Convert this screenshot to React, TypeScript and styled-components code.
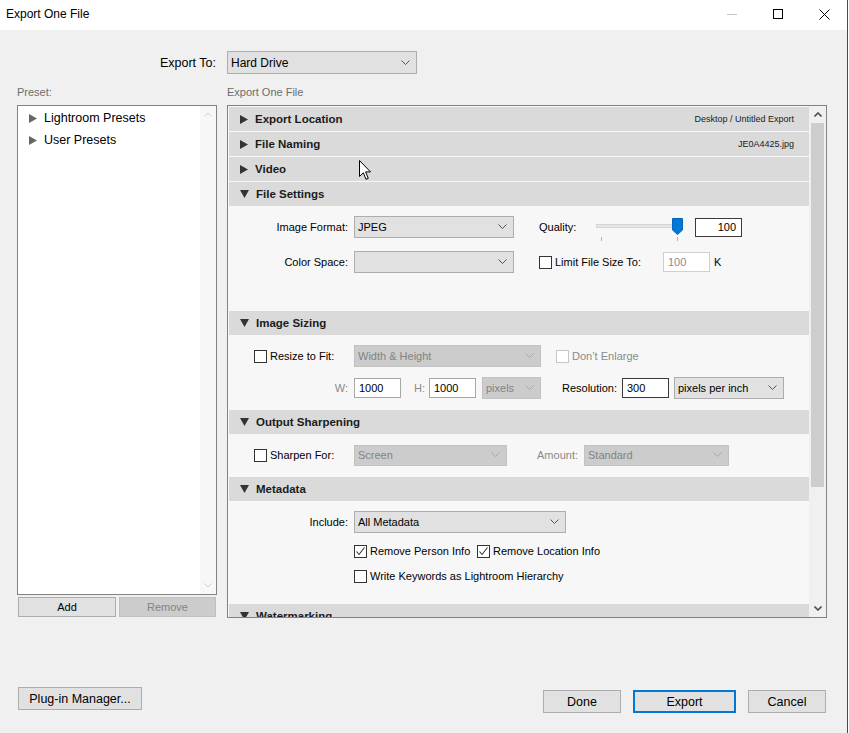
import React from 'react';
import styled, { createGlobalStyle } from 'styled-components';

const Global = createGlobalStyle`
  html, body { margin: 0; padding: 0; }
  body {
    width: 849px; height: 733px; overflow: hidden; background: #ffffff;
    font-family: "Liberation Sans", Arial, sans-serif; color: #000;
  }
`;

const Win = styled.div`
  box-sizing: border-box;
  width: 848px; height: 733px;
  display: flex; flex-direction: column;
  background: #f0f0f0;
  border-right: 1px solid #4a4a4a;
`;

const TitleBar = styled.div`
  height: 30px; flex: none;
  background: #ffffff;
  display: flex; align-items: center;
`;

const Title = styled.div`
  padding-left: 6px; font-size: 12px; margin-top: -2px;
`;

const Controls = styled.div`
  margin-left: auto; display: flex; height: 100%;
`;

const CtrlBtn = styled.div`
  width: 46px; height: 100%;
  display: flex; align-items: center; justify-content: center;
  margin-top: -1px;
`;

const Body = styled.div`
  flex: 1;
  display: flex; flex-direction: column;
  padding: 0 20px 0 17px;
`;

const MainGrid = styled.div`
  display: grid;
  grid-template-columns: 200px 600px;
  column-gap: 10px;
`;

const ExportToLabel = styled.div`
  margin-top: 21px;
  height: 23px;
  display: flex; align-items: center; justify-content: flex-end;
  font-size: 12.5px; padding-right: 1px;
`;

const ExportToCell = styled.div`
  margin-top: 21px;
`;

const Caption = styled.div`
  margin-top: 11px; margin-bottom: 6px;
  height: 14px; line-height: 14px;
  font-size: 11px; color: #6d6d6d;
`;

const SelectBox = styled.div<{ $w: number; $h?: number; $disabled?: boolean; $ml?: number; $fs?: number }>`
  box-sizing: border-box;
  width: ${p => p.$w}px; height: ${p => p.$h ?? 22}px;
  margin-left: ${p => p.$ml ?? 0}px;
  flex: none;
  display: flex; align-items: center; justify-content: space-between;
  padding: 0 6px 0 3px;
  background: ${p => (p.$disabled ? '#cccccc' : '#e1e1e1')};
  border: 1px solid ${p => (p.$disabled ? '#c2c2c2' : '#adadad')};
  color: ${p => (p.$disabled ? '#838383' : '#000')};
  font-size: ${p => p.$fs ?? 11}px;
  white-space: nowrap;
`;

const Chevron = ({ color = '#555', up = false, w = 9, sw = 1 }: { color?: string; up?: boolean; w?: number; sw?: number }) => (
  <svg width={w} height={Math.ceil(w / 2) + 1} viewBox={`0 0 ${w} ${Math.ceil(w / 2) + 1}`}>
    <polyline
      points={up
        ? `0.5,${w / 2 + 0.5} ${w / 2},1 ${w - 0.5},${w / 2 + 0.5}`
        : `0.5,0.5 ${w / 2},${w / 2} ${w - 0.5},0.5`}
      fill="none" stroke={color} strokeWidth={sw}
    />
  </svg>
);

const Select = ({ w, h, disabled, ml, fs, children }: { w: number; h?: number; disabled?: boolean; ml?: number; fs?: number; children?: React.ReactNode }) => (
  <SelectBox $w={w} $h={h} $disabled={disabled} $ml={ml} $fs={fs}>
    <span>{children}</span>
    <Chevron color={disabled ? '#a6a6a6' : '#555'} />
  </SelectBox>
);

/* ---------- Left preset column ---------- */

const PresetCol = styled.div`
  display: flex; flex-direction: column;
`;

const PresetBox = styled.div`
  box-sizing: border-box;
  height: 490px;
  background: #ffffff;
  border: 1px solid #828282;
  display: flex;
`;

const PresetList = styled.div`
  flex: 1; padding-top: 1px;
`;

const TreeItem = styled.div`
  height: 22px;
  display: flex; align-items: center;
  padding-left: 11px; gap: 7px;
  font-size: 12.5px;
`;

const TriRight = ({ color = '#333', size = 9 }: { color?: string; size?: number }) => (
  <svg width={size - 1} height={size} viewBox="0 0 8 9">
    <polygon points="0,0 8,4.5 0,9" fill={color} />
  </svg>
);

const TriDown = ({ color = '#333' }: { color?: string }) => (
  <svg width="9" height="8" viewBox="0 0 9 8">
    <polygon points="0,0 9,0 4.5,8" fill={color} />
  </svg>
);

const VScroll = styled.div<{ $w: number; $bg: string }>`
  width: ${p => p.$w}px; flex: none;
  background: ${p => p.$bg};
  display: flex; flex-direction: column;
`;

const ScrollArrow = styled.div`
  height: 17px; flex: none;
  display: flex; align-items: center; justify-content: center;
`;

const ScrollThumb = styled.div<{ $h: number }>`
  height: ${p => p.$h}px; margin: 0 2px;
  background: #cdcdcd;
`;

const ScrollFill = styled.div`
  flex: 1;
`;

const BtnRow = styled.div`
  margin-top: 2px;
  display: grid; grid-template-columns: 98px 97px; column-gap: 3px;
  padding-left: 1px;
`;

const SmallBtn = styled.div<{ $disabled?: boolean }>`
  box-sizing: border-box; height: 20px;
  display: flex; align-items: center; justify-content: center;
  font-size: 11px;
  background: ${p => (p.$disabled ? '#cccccc' : '#e1e1e1')};
  border: 1px solid ${p => (p.$disabled ? '#bfbfbf' : '#adadad')};
  color: ${p => (p.$disabled ? '#838383' : '#000')};
`;

/* ---------- Right export panel ---------- */

const ExportBox = styled.div`
  position: relative;
  box-sizing: border-box;
  height: 513px;
  border: 1px solid #828282;
  background: #f7f7f7;
  display: flex;
`;

const Sections = styled.div`
  flex: 1;
  padding: 1px 0 0 1px;
  overflow: hidden;
`;

const SectionHeader = styled.div`
  height: 24px; margin-bottom: 1px;
  background: #dadada;
  display: flex; align-items: center;
  padding: 0 15px 0 11px; gap: 7px;
`;

const HeaderTitle = styled.div`
  font-weight: 700; font-size: 11.5px; color: #1b1b1b;
`;

const HeaderInfo = styled.div`
  margin-left: auto; font-size: 9px; color: #1b1b1b;
`;

const SectionBody = styled.div<{ $h: number }>`
  box-sizing: border-box;
  height: ${p => p.$h}px;
  padding-top: 9px;
`;

const FieldRow = styled.div<{ $mt?: number; $h?: number }>`
  display: flex; align-items: center;
  height: ${p => p.$h ?? 22}px;
  margin-top: ${p => p.$mt ?? 0}px;
`;

const LabelCell = styled.div<{ $left?: boolean; $dim?: boolean }>`
  box-sizing: border-box;
  width: 125px; flex: none;
  display: flex; align-items: center;
  justify-content: ${p => (p.$left ? 'flex-start' : 'flex-end')};
  padding: ${p => (p.$left ? '0 0 0 25px' : '0 6px 0 0')};
  font-size: 11px;
  color: ${p => (p.$dim ? '#8a8a8a' : '#000')};
  white-space: nowrap;
`;

const InlineLabel = styled.div<{ $w?: number; $ml?: number; $right?: boolean; $dim?: boolean; $pr?: number }>`
  box-sizing: border-box;
  ${p => (p.$w ? `width: ${p.$w}px;` : '')}
  flex: none;
  margin-left: ${p => p.$ml ?? 0}px;
  padding-right: ${p => p.$pr ?? 0}px;
  display: flex; align-items: center;
  justify-content: ${p => (p.$right ? 'flex-end' : 'flex-start')};
  font-size: 11px;
  color: ${p => (p.$dim ? '#8a8a8a' : '#000')};
  white-space: nowrap;
`;

const CheckBoxBox = styled.div<{ $disabled?: boolean }>`
  box-sizing: border-box;
  width: 13px; height: 13px; flex: none;
  margin-right: 3px;
  background: #ffffff;
  border: 1px solid ${p => (p.$disabled ? '#c6c6c6' : '#333333')};
  display: flex; align-items: center; justify-content: center;
`;

const Check = ({ checked, disabled }: { checked?: boolean; disabled?: boolean }) => (
  <CheckBoxBox $disabled={disabled}>
    {checked && (
      <svg width="11" height="11" viewBox="0 0 11 11">
        <polyline points="1.5,5.5 4,8.5 9.5,1.5" fill="none" stroke="#333" strokeWidth="1.1" />
      </svg>
    )}
  </CheckBoxBox>
);

const TextField = styled.div<{ $w: number; $h?: number; $disabled?: boolean; $dark?: boolean; $right?: boolean; $ml?: number }>`
  box-sizing: border-box; flex: none;
  width: ${p => p.$w}px; height: ${p => p.$h ?? 20}px;
  margin-left: ${p => p.$ml ?? 0}px;
  background: #ffffff;
  border: 1px solid ${p => (p.$dark ? '#3a3a3a' : p.$disabled ? '#d0d0d0' : '#a8a8a8')};
  color: ${p => (p.$disabled ? '#8a8a8a' : '#000')};
  font-size: 11px;
  display: flex; align-items: center;
  justify-content: ${p => (p.$right ? 'flex-end' : 'flex-start')};
  padding: 0 5px 0 4px;
`;

const SliderWrap = styled.div`
  position: relative;
  width: 86px; height: 22px; flex: none;
`;

const SliderTrack = styled.div`
  position: absolute; left: 0; right: 6px; top: 8px;
  height: 4px; box-sizing: border-box;
  background: #e7e7e7; border: 1px solid #d4d4d4;
`;

const SliderTick = styled.div<{ $x: number }>`
  position: absolute; left: ${p => p.$x}px; top: 21px;
  width: 1px; height: 4px; background: #b5b5b5;
`;

const SliderThumb = styled.svg`
  position: absolute; left: 76px; top: 2px;
`;

const Cursor = styled.svg`
  position: absolute; left: 131px; top: 54px;
`;

/* ---------- Footer ---------- */

const Footer = styled.div`
  margin-top: 69px;
  display: flex; align-items: flex-start;
  padding-left: 1px;
`;

const DlgButton = styled.div<{ $w: number; $primary?: boolean; $mt?: number; $ml?: number }>`
  box-sizing: border-box;
  width: ${p => p.$w}px; height: 23px;
  margin-top: ${p => p.$mt ?? 0}px;
  margin-left: ${p => p.$ml ?? 0}px;
  display: flex; align-items: center; justify-content: center;
  background: #e1e1e1;
  border: ${p => (p.$primary ? '2px solid #0078d7' : '1px solid #adadad')};
  font-size: 12.5px;
`;

export default function App() {
  return (
    <>
      <Global />
      <Win>
        <TitleBar>
          <Title>Export One File</Title>
          <Controls>
            <CtrlBtn>
              <svg width="10" height="10" viewBox="0 0 10 10"><line x1="0" y1="5.5" x2="10" y2="5.5" stroke="#c4c4c4" strokeWidth="1" /></svg>
            </CtrlBtn>
            <CtrlBtn>
              <svg width="10" height="10" viewBox="0 0 10 10"><rect x="0.5" y="0.5" width="9" height="9" fill="none" stroke="#000" strokeWidth="1" /></svg>
            </CtrlBtn>
            <CtrlBtn>
              <svg width="11" height="11" viewBox="0 0 11 11"><path d="M0.5 0.5 L10.5 10.5 M10.5 0.5 L0.5 10.5" stroke="#000" strokeWidth="1" /></svg>
            </CtrlBtn>
          </Controls>
        </TitleBar>

        <Body>
          <MainGrid>
            <ExportToLabel>Export To:</ExportToLabel>
            <ExportToCell>
              <Select w={190} h={23} fs={12}>Hard Drive</Select>
            </ExportToCell>

            <Caption>Preset:</Caption>
            <Caption>Export One File</Caption>

            <PresetCol>
              <PresetBox>
                <PresetList>
                  <TreeItem><TriRight color="#666" />Lightroom Presets</TreeItem>
                  <TreeItem><TriRight color="#666" />User Presets</TreeItem>
                </PresetList>
                <VScroll $w={16} $bg="#f7f7f7">
                  <ScrollArrow><Chevron up color="#cfcfcf" w={8} /></ScrollArrow>
                  <ScrollFill />
                  <ScrollArrow><Chevron color="#cfcfcf" w={8} /></ScrollArrow>
                </VScroll>
              </PresetBox>
              <BtnRow>
                <SmallBtn>Add</SmallBtn>
                <SmallBtn $disabled>Remove</SmallBtn>
              </BtnRow>
            </PresetCol>

            <ExportBox>
              <Sections>
                <SectionHeader>
                  <TriRight /><HeaderTitle>Export Location</HeaderTitle>
                  <HeaderInfo>Desktop / Untitled Export</HeaderInfo>
                </SectionHeader>
                <SectionHeader>
                  <TriRight /><HeaderTitle>File Naming</HeaderTitle>
                  <HeaderInfo>JE0A4425.jpg</HeaderInfo>
                </SectionHeader>
                <SectionHeader>
                  <TriRight /><HeaderTitle>Video</HeaderTitle>
                </SectionHeader>
                <SectionHeader>
                  <TriDown /><HeaderTitle>File Settings</HeaderTitle>
                </SectionHeader>
                <SectionBody $h={104}>
                  <FieldRow>
                    <LabelCell>Image Format:</LabelCell>
                    <Select w={160}>JPEG</Select>
                    <InlineLabel $ml={25} $w={57}>Quality:</InlineLabel>
                    <SliderWrap>
                      <SliderTrack />
                      <SliderTick $x={5} />
                      <SliderTick $x={81} />
                      <SliderThumb width="11" height="17" viewBox="0 0 11 17">
                        <path d="M0.5 0.5 H10.5 V12 L5.5 16.5 L0.5 12 Z" fill="#0078d7" stroke="#0067bd" strokeWidth="1" />
                      </SliderThumb>
                    </SliderWrap>
                    <TextField $w={47} $h={19} $ml={13} $dark $right>100</TextField>
                  </FieldRow>
                  <FieldRow $mt={13}>
                    <LabelCell>Color Space:</LabelCell>
                    <Select w={160}></Select>
                    <InlineLabel $ml={25} $w={124}><Check />Limit File Size To:</InlineLabel>
                    <TextField $w={47} $disabled>100</TextField>
                    <InlineLabel $ml={4}>K</InlineLabel>
                  </FieldRow>
                </SectionBody>

                <SectionHeader>
                  <TriDown /><HeaderTitle>Image Sizing</HeaderTitle>
                </SectionHeader>
                <SectionBody $h={74}>
                  <FieldRow>
                    <LabelCell $left><Check />Resize to Fit:</LabelCell>
                    <Select w={187} disabled>Width &amp; Height</Select>
                    <InlineLabel $ml={15} $dim><Check disabled />Don’t Enlarge</InlineLabel>
                  </FieldRow>
                  <FieldRow $mt={10}>
                    <LabelCell $dim>W:</LabelCell>
                    <TextField $w={47}>1000</TextField>
                    <InlineLabel $w={28} $right $pr={4} $dim>H:</InlineLabel>
                    <TextField $w={47}>1000</TextField>
                    <Select w={59} ml={6} disabled>pixels</Select>
                    <InlineLabel $w={81} $right $pr={5}>Resolution:</InlineLabel>
                    <TextField $w={47} $dark>300</TextField>
                    <Select w={110} ml={5}>pixels per inch</Select>
                  </FieldRow>
                </SectionBody>

                <SectionHeader>
                  <TriDown /><HeaderTitle>Output Sharpening</HeaderTitle>
                </SectionHeader>
                <SectionBody $h={42}>
                  <FieldRow>
                    <LabelCell $left><Check />Sharpen For:</LabelCell>
                    <Select w={153} h={21} disabled>Screen</Select>
                    <InlineLabel $w={77} $right $pr={6} $dim>Amount:</InlineLabel>
                    <Select w={145} h={21} disabled>Standard</Select>
                  </FieldRow>
                </SectionBody>

                <SectionHeader>
                  <TriDown /><HeaderTitle>Metadata</HeaderTitle>
                </SectionHeader>
                <SectionBody $h={102}>
                  <FieldRow>
                    <LabelCell>Include:</LabelCell>
                    <Select w={212}>All Metadata</Select>
                  </FieldRow>
                  <FieldRow $mt={8} $h={20}>
                    <LabelCell />
                    <InlineLabel $w={123}><Check checked />Remove Person Info</InlineLabel>
                    <InlineLabel><Check checked />Remove Location Info</InlineLabel>
                  </FieldRow>
                  <FieldRow $mt={5} $h={20}>
                    <LabelCell />
                    <InlineLabel><Check />Write Keywords as Lightroom Hierarchy</InlineLabel>
                  </FieldRow>
                </SectionBody>

                <SectionHeader>
                  <TriDown /><HeaderTitle>Watermarking</HeaderTitle>
                </SectionHeader>
              </Sections>

              <VScroll $w={17} $bg="#f0f0f0">
                <ScrollArrow><Chevron up color="#505050" w={8} sw={1.6} /></ScrollArrow>
                <ScrollThumb $h={364} />
                <ScrollFill />
                <ScrollArrow><Chevron color="#505050" w={8} sw={1.6} /></ScrollArrow>
              </VScroll>

              <Cursor width="13" height="21" viewBox="0 0 13 21">
                <path d="M0.5 0.5 L0.5 16.5 L4.3 12.8 L7 19.3 L9.3 18.3 L6.6 11.9 L11.5 11.9 Z" fill="#fff" stroke="#000" strokeWidth="1" strokeLinejoin="round" />
              </Cursor>
            </ExportBox>
          </MainGrid>

          <Footer>
            <DlgButton $w={124}>Plug-in Manager...</DlgButton>
            <DlgButton $w={78} $mt={3} $ml={401}>Done</DlgButton>
            <DlgButton $w={103} $mt={3} $ml={12} $primary>Export</DlgButton>
            <DlgButton $w={78} $mt={3} $ml={12}>Cancel</DlgButton>
          </Footer>
        </Body>
      </Win>
    </>
  );
}
